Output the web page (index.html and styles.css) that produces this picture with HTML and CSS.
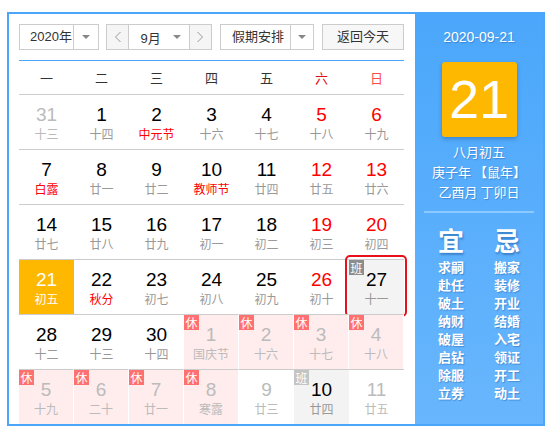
FILE: index.html
```html
<!DOCTYPE html>
<html lang="zh">
<head>
<meta charset="utf-8">
<link rel="stylesheet" href="styles.css">
</head>
<body>
<div class="frame">
  <div class="left">
    <div class="controls">
      <div class="select year">
        <span class="sel-text">2020年</span>
        <span class="sel-arrow"><i class="tri"></i></span>
      </div>
      <div class="month-group">
        <span class="nav"><svg width="8" height="12" viewBox="0 0 8 12"><polyline points="6.5,1 1.5,6 6.5,11" fill="none" stroke="#999" stroke-width="1"/></svg></span>
        <span class="month"><span>9月</span><i class="tri"></i></span>
        <span class="nav"><svg width="8" height="12" viewBox="0 0 8 12"><polyline points="1.5,1 6.5,6 1.5,11" fill="none" stroke="#999" stroke-width="1"/></svg></span>
      </div>
      <div class="select holiday">
        <span class="sel-text">假期安排</span>
        <span class="sel-arrow"><i class="tri"></i></span>
      </div>
      <div class="today-btn">返回今天</div>
    </div>
    <div class="cal">
      <div class="week">
        <span>一</span><span>二</span><span>三</span><span>四</span><span>五</span><span class="sat">六</span><span class="sun">日</span>
      </div>
      <div class="grid">
        <div class="cell other"><b>31</b><em>十三</em></div>
        <div class="cell"><b>1</b><em>十四</em></div>
        <div class="cell"><b>2</b><em class="fest">中元节</em></div>
        <div class="cell"><b>3</b><em>十六</em></div>
        <div class="cell"><b>4</b><em>十七</em></div>
        <div class="cell wkend"><b>5</b><em>十八</em></div>
        <div class="cell wkend"><b>6</b><em>十九</em></div>

        <div class="cell"><b>7</b><em class="fest">白露</em></div>
        <div class="cell"><b>8</b><em>廿一</em></div>
        <div class="cell"><b>9</b><em>廿二</em></div>
        <div class="cell"><b>10</b><em class="fest">教师节</em></div>
        <div class="cell"><b>11</b><em>廿四</em></div>
        <div class="cell wkend"><b>12</b><em>廿五</em></div>
        <div class="cell wkend"><b>13</b><em>廿六</em></div>

        <div class="cell"><b>14</b><em>廿七</em></div>
        <div class="cell"><b>15</b><em>廿八</em></div>
        <div class="cell"><b>16</b><em>廿九</em></div>
        <div class="cell"><b>17</b><em>初一</em></div>
        <div class="cell"><b>18</b><em>初二</em></div>
        <div class="cell wkend"><b>19</b><em>初三</em></div>
        <div class="cell wkend"><b>20</b><em>初四</em></div>

        <div class="cell today"><b>21</b><em>初五</em></div>
        <div class="cell"><b>22</b><em class="fest">秋分</em></div>
        <div class="cell"><b>23</b><em>初七</em></div>
        <div class="cell"><b>24</b><em>初八</em></div>
        <div class="cell"><b>25</b><em>初九</em></div>
        <div class="cell wkend"><b>26</b><em>初十</em></div>
        <div class="cell work selected"><span class="badge ban">班</span><b>27</b><em>十一</em></div>

        <div class="cell"><b>28</b><em>十二</em></div>
        <div class="cell"><b>29</b><em>十三</em></div>
        <div class="cell"><b>30</b><em>十四</em></div>
        <div class="cell rest"><span class="badge xiu">休</span><b>1</b><em>国庆节</em></div>
        <div class="cell rest"><span class="badge xiu">休</span><b>2</b><em>十六</em></div>
        <div class="cell rest"><span class="badge xiu">休</span><b>3</b><em>十七</em></div>
        <div class="cell rest"><span class="badge xiu">休</span><b>4</b><em>十八</em></div>

        <div class="cell rest"><span class="badge xiu">休</span><b>5</b><em>十九</em></div>
        <div class="cell rest"><span class="badge xiu">休</span><b>6</b><em>二十</em></div>
        <div class="cell rest"><span class="badge xiu">休</span><b>7</b><em>廿一</em></div>
        <div class="cell rest"><span class="badge xiu">休</span><b>8</b><em>寒露</em></div>
        <div class="cell other"><b>9</b><em>廿三</em></div>
        <div class="cell work2"><span class="badge ban2">班</span><b>10</b><em>廿四</em></div>
        <div class="cell other"><b>11</b><em>廿五</em></div>
      </div>
    </div>
  </div>
  <div class="right">
    <div class="r-date">2020-09-21</div>
    <div class="r-day">21</div>
    <div class="r-lines">
      <div>八月初五</div>
      <div>庚子年 【鼠年】</div>
      <div>乙酉月 丁卯日</div>
    </div>
    <div class="r-sep"></div>
    <div class="r-yj">
      <div class="col">
        <div class="yj-title">宜</div>
        <div>求嗣</div><div>赴任</div><div>破土</div><div>纳财</div><div>破屋</div><div>启钻</div><div>除服</div><div>立券</div>
      </div>
      <div class="col">
        <div class="yj-title">忌</div>
        <div>搬家</div><div>装修</div><div>开业</div><div>结婚</div><div>入宅</div><div>领证</div><div>开工</div><div>动土</div>
      </div>
    </div>
  </div>
</div>
</body>
</html>
```

FILE: styles.css
```css
* { box-sizing: border-box; }
html, body { margin: 0; padding: 0; background: #fff; }
body {
  font-family: "Liberation Sans", "Noto Sans CJK SC", sans-serif;
  padding: 12px 0 0 7px;
}
.frame {
  width: 538px;
  height: 414px;
  border: 2px solid #4ba5f8;
  display: flex;
  overflow: hidden;
}
.left {
  width: 406px;
  padding: 10px 0 0 10px;
  background: #fff;
}
.controls {
  display: flex;
  height: 26px;
  font-size: 13px;
  color: #333;
}
.select {
  display: flex;
  border: 1px solid #ccc;
  background: #fff;
}
.year { width: 80px; margin-right: 7px; }
.year .sel-text { width: 54px; padding-left: 10px; }
.holiday { width: 94px; margin-left: 8px; margin-right: 8px; }
.holiday .sel-text { width: 70px; padding-left: 11px; }
.sel-text { line-height: 24px; border-right: 1px solid #ccc; white-space: nowrap; }
.sel-arrow { flex: 1; display: flex; align-items: center; justify-content: center; }
.tri {
  display: block;
  width: 0; height: 0;
  border-left: 4px solid transparent;
  border-right: 4px solid transparent;
  border-top: 4px solid #888;
}
.month-group {
  display: flex;
  width: 106px;
  border: 1px solid #ccc;
}
.nav {
  width: 22px;
  background: #f5f5f5;
  display: flex; align-items: center; justify-content: center;
}
.month {
  width: 62px;
  border-left: 1px solid #ccc;
  border-right: 1px solid #ccc;
  display: flex; align-items: center; justify-content: space-between;
  padding: 0 8px 0 11px;
  background: #fff;
}
.today-btn {
  width: 82px;
  border: 1px solid #ccc;
  background: #f7f7f7;
  text-align: center;
  line-height: 24px;
}
.cal {
  width: 385px;
  margin-top: 10px;
  border-top: 1px solid #4ba5f8;
}
.week {
  display: grid;
  grid-template-columns: repeat(7, 55px);
  height: 33px;
  line-height: 33px;
  font-size: 13px;
  color: #333;
  text-align: center;
  font-family: "Noto Sans CJK SC", sans-serif;
}
.week .sat { color: #e0101a; }
.week .sun { color: #ff4a4a; }
.grid {
  display: grid;
  grid-template-columns: repeat(7, 55px);
  grid-auto-rows: 55px;
}
.cell {
  position: relative;
  border-top: 1px solid #ccc;
  display: flex;
  flex-direction: column;
  align-items: center;
  padding-top: 10px;
}
.cell b {
  font-weight: normal;
  font-size: 19px;
  line-height: 20px;
  color: #000;
}
.cell em {
  font-style: normal;
  font-size: 12px;
  line-height: 17px;
  color: #999;
  font-family: "Noto Sans CJK SC", sans-serif;
}
.cell em.fest { color: #f00; }
.cell.wkend b { color: #f00; }
.cell.other b, .cell.other em { color: #bbb; }
.cell.today { background: #ffb800; }
.cell.today b, .cell.today em { color: #fff; }
.cell.rest {
  background: #ffeded;
  border-right: 1px solid #fff;
}
.cell.rest b, .cell.rest em { color: #bbb; }
.cell.work { background: #f3f3f3; }
.cell.work2 { background: #f3f3f3; }
.cell.selected::after {
  content: "";
  position: absolute;
  left: -4px; top: -5px; right: -3px; bottom: -3px;
  border: 2px solid #e8101a;
  border-radius: 5px;
}
.badge {
  position: absolute;
  left: 0; top: 0;
  width: 15px; height: 15px;
  font-size: 12px;
  line-height: 15px;
  text-align: center;
  color: #fff;
  font-family: "Noto Sans CJK SC", sans-serif;
}
.xiu { background: #ff7070; }
.ban { background: #8c8c8c; }
.ban2 { background: #c4c4c4; }
.right {
  width: 128px;
  background: linear-gradient(#4ba7fb, #68b6fd);
  color: #fff;
  display: flex;
  flex-direction: column;
  align-items: center;
  text-shadow: 1px 1px 1px rgba(20, 70, 140, 0.35);
}
.r-date {
  margin-top: 15px;
  font-size: 14px;
  line-height: 16px;
}
.r-day {
  margin-top: 17px;
  width: 75px;
  height: 75px;
  background: #ffb800;
  border-radius: 3px;
  box-shadow: 0 2px 4px rgba(0, 40, 100, 0.3);
  font-size: 54px;
  line-height: 75px;
  text-align: center;
  text-shadow: none;
}
.r-lines {
  margin-top: 5px;
  font-size: 13px;
  line-height: 20px;
  text-align: center;
  font-family: "Noto Sans CJK SC", sans-serif;
}
.r-sep {
  margin-top: 9px;
  width: 110px;
  height: 2px;
  background: #8ccaff;
}
.r-yj {
  margin-top: 12px;
  display: grid;
  grid-template-columns: 56px 56px;
  font-family: "Noto Sans CJK SC", sans-serif;
  font-size: 13px;
  line-height: 18px;
  font-weight: bold;
  text-align: center;
}
.yj-title {
  font-size: 26px;
  line-height: 30px;
  margin-bottom: 3px;
  text-shadow: 1px 2px 2px rgba(20, 70, 140, 0.45);
}
```
